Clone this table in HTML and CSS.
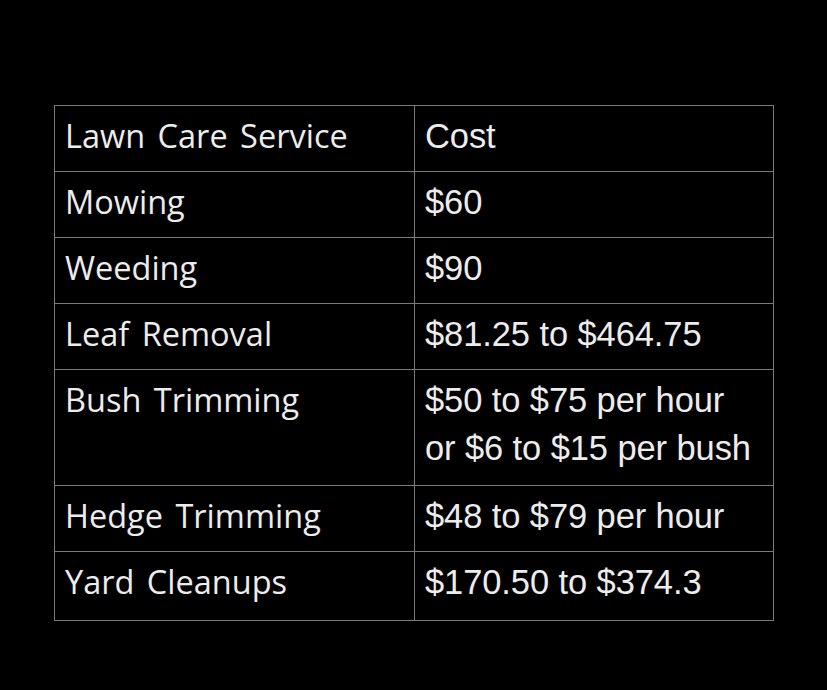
FILE: index.html
```html
<!DOCTYPE html>
<html>
<head>
<meta charset="utf-8">
<link rel="stylesheet" href="styles.css">
</head>
<body>
<main class="page">
<table class="price-table">
<tbody>
<tr><td class="svc">Lawn Care Service</td><td class="cost">Cost</td></tr>
<tr><td class="svc">Mowing</td><td class="cost">$60</td></tr>
<tr><td class="svc">Weeding</td><td class="cost">$90</td></tr>
<tr><td class="svc">Leaf Removal</td><td class="cost">$81.25 to $464.75</td></tr>
<tr class="tall"><td class="svc">Bush Trimming</td><td class="cost">$50 to $75 per hour<br>or $6 to $15 per bush</td></tr>
<tr><td class="svc">Hedge Trimming</td><td class="cost">$48 to $79 per hour</td></tr>
<tr class="last"><td class="svc">Yard Cleanups</td><td class="cost">$170.50 to $374.3</td></tr>
</tbody>
</table>
</main>
</body>
</html>
```

FILE: styles.css
```css
html, body {
  margin: 0;
  padding: 0;
  background: #000;
}
.page {
  width: 827px;
  height: 690px;
  padding: 105px 0 0 54px;
  box-sizing: border-box;
}
.price-table {
  border-collapse: collapse;
  width: 720px;
  color: #ececec;
}
.price-table td {
  border: 1px solid #7a7a7a;
  padding: 6px 8px 11px 10px;
  height: 48px;
  line-height: 48px;
  vertical-align: baseline;
  text-align: left;
}
.svc {
  width: 341px;
  font-family: "Open Sans", sans-serif;
  font-size: 32.5px;
  word-spacing: 4px;
}
.cost {
  font-family: "Liberation Sans", Arial, sans-serif;
  font-size: 34.5px;
  letter-spacing: -0.1px;
  line-height: 47.5px;
}
.tall td {
  padding-bottom: 13px;
}
.last td {
  padding-bottom: 14px;
}
```
